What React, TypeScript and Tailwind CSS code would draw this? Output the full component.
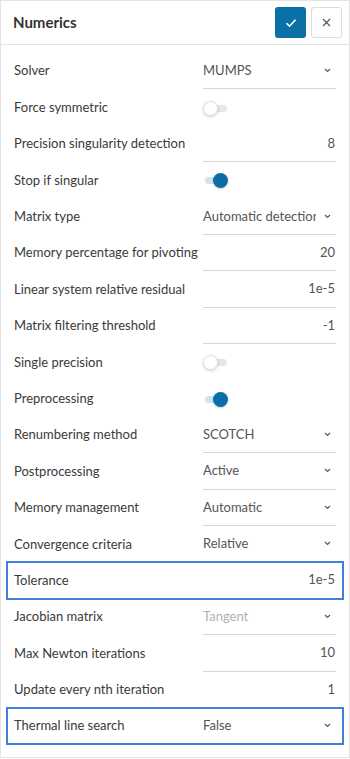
type Row =
  | { kind: "select"; label: string; value: string; disabled?: boolean; box?: boolean }
  | { kind: "number"; label: string; value: string; box?: boolean }
  | { kind: "toggle"; label: string; on: boolean };

const rows: Row[] = [
  { kind: "select", label: "Solver", value: "MUMPS" },
  { kind: "toggle", label: "Force symmetric", on: false },
  { kind: "number", label: "Precision singularity detection", value: "8" },
  { kind: "toggle", label: "Stop if singular", on: true },
  { kind: "select", label: "Matrix type", value: "Automatic detection" },
  { kind: "number", label: "Memory percentage for pivoting", value: "20" },
  { kind: "number", label: "Linear system relative residual", value: "1e-5" },
  { kind: "number", label: "Matrix filtering threshold", value: "-1" },
  { kind: "toggle", label: "Single precision", on: false },
  { kind: "toggle", label: "Preprocessing", on: true },
  { kind: "select", label: "Renumbering method", value: "SCOTCH" },
  { kind: "select", label: "Postprocessing", value: "Active" },
  { kind: "select", label: "Memory management", value: "Automatic" },
  { kind: "select", label: "Convergence criteria", value: "Relative" },
  { kind: "number", label: "Tolerance", value: "1e-5", box: true },
  { kind: "select", label: "Jacobian matrix", value: "Tangent", disabled: true },
  { kind: "number", label: "Max Newton iterations", value: "10" },
  { kind: "number", label: "Update every nth iteration", value: "1" },
  { kind: "select", label: "Thermal line search", value: "False", box: true },
];

function Chevron() {
  return (
    <svg width="7" height="5" viewBox="0 0 7 5" className="shrink-0">
      <path d="M1 1l2.5 2.5L6 1" fill="none" stroke="#555" strokeWidth="1.1" />
    </svg>
  );
}

function Toggle({ on }: { on: boolean }) {
  return (
    <div className="relative h-[16px] w-[26px]">
      <div
        className={`absolute left-[2px] top-[5px] h-[7px] w-[22px] rounded-full ${
          on ? "bg-[#cfe4f2]" : "bg-[#e6e6e6]"
        }`}
      />
      <div
        className={`absolute top-[1px] h-[15px] w-[15px] rounded-full ${
          on
            ? "left-[10px] bg-[#0a6fa6] shadow-[0_1px_2px_rgba(0,0,0,0.2)]"
            : "left-0 border border-[#e2e2e2] bg-white shadow-[0_1px_3px_rgba(0,0,0,0.18)]"
        }`}
      />
    </div>
  );
}

function FieldRow({ row }: { row: Row }) {
  const box = row.kind !== "toggle" && row.box;
  return (
    <div className="relative flex h-[36.4px] items-center px-[13px]">
      <div className="w-[189px] shrink-0 truncate text-[13px] text-[#3a3a3a]">{row.label}</div>
      {row.kind === "toggle" ? (
        <div className="flex h-full flex-1 items-center">
          <Toggle on={row.on} />
        </div>
      ) : (
        <div className="flex h-full min-w-0 flex-1 items-center border-b border-[#d6d6d6]">
          {row.kind === "select" ? (
            <>
              <span
                className={`min-w-0 flex-1 overflow-hidden whitespace-nowrap text-[13px] ${
                  row.disabled ? "text-[#b0b0b0]" : "text-[#555]"
                }`}
              >
                {row.value}
              </span>
              <span className="ml-[8px] mr-[5px] flex items-center">
                <Chevron />
              </span>
            </>
          ) : (
            <span className="flex-1 pr-[1px] text-right text-[13px] text-[#555]">{row.value}</span>
          )}
        </div>
      )}
      {box && (
        <div className="pointer-events-none absolute inset-y-[-1px] left-[5px] right-[5px] border-[2.5px] border-[#3f7fe0]" />
      )}
    </div>
  );
}

export default function App() {
  return (
    <div className="h-[759px] w-[350px] bg-white font-['Lato',sans-serif]">
      <div className="flex h-[758px] flex-col border border-[#e3e3e3] bg-white">
        <div className="flex h-[44px] shrink-0 items-center justify-between border-b border-[#e3e3e3] pl-[12px] pr-[7px]">
          <h1 className="text-[15px] font-bold text-[#333]">Numerics</h1>
          <div className="flex items-center gap-[5px]">
            <button className="flex h-[31px] w-[31px] items-center justify-center rounded-[3px] bg-[#0b70a6]">
              <svg width="12" height="10" viewBox="0 0 12 10">
                <path d="M1.5 5.2l3 3 6-6.5" fill="none" stroke="#fff" strokeWidth="1.6" />
              </svg>
            </button>
            <button className="flex h-[31px] w-[31px] items-center justify-center rounded-[3px] border border-[#dcdcdc] bg-white">
              <svg width="9" height="9" viewBox="0 0 9 9">
                <path d="M1 1l7 7M8 1l-7 7" stroke="#555" strokeWidth="1.2" />
              </svg>
            </button>
          </div>
        </div>
        <div className="pt-[8px]">
          {rows.map((r) => (
            <FieldRow key={r.label} row={r} />
          ))}
        </div>
      </div>
    </div>
  );
}
